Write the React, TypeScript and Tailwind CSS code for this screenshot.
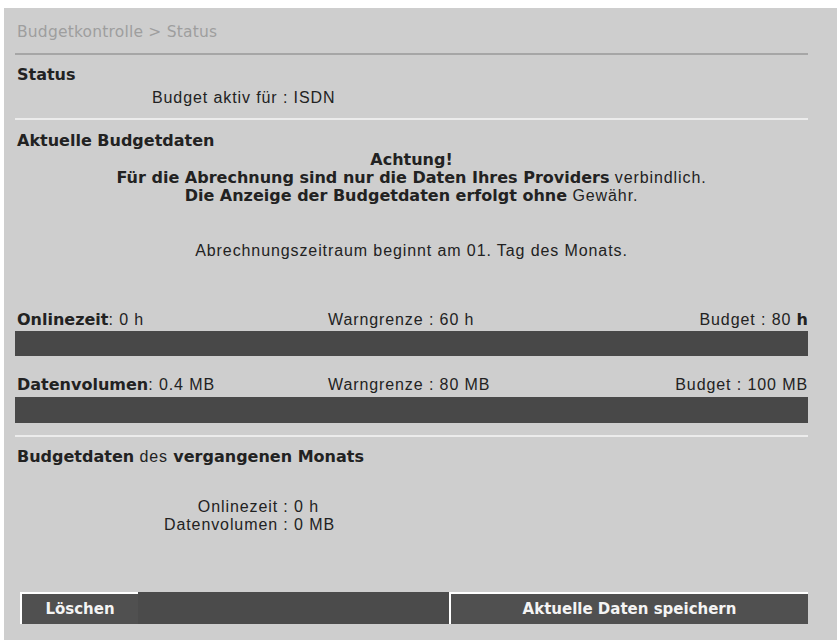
import React from 'react';

const sans = "font-['Liberation_Sans',Arial,sans-serif]";
const heavy = "font-['DejaVu_Sans',Verdana,sans-serif] font-bold tracking-normal";

function B({ children }: { children: React.ReactNode }) {
  return <span className={heavy}>{children}</span>;
}

function UsageRow({ label, value, warn, budget }: { label: string; value: string; warn: string; budget: React.ReactNode }) {
  return (
    <div className="grid grid-cols-[313px_1fr_auto] leading-[18px]">
      <div className="pl-[2px]">
        <B>{label}</B>: {value}
      </div>
      <div>Warngrenze : {warn}</div>
      <div>Budget : {budget}</div>
    </div>
  );
}

export default function App() {
  return (
    <div className="min-h-[640px] bg-white pt-2 pl-1">
      <div className={`${sans} min-h-[632px] bg-[#cecece] pl-[11px] pr-[29px] pt-[15px] text-[16px] tracking-[0.9px] text-[#222]`}>
        <div className="pl-[2px] font-['DejaVu_Sans',Verdana,sans-serif] text-[15.5px] leading-[18px] tracking-[0.2px] text-[#9e9e9e]">
          Budgetkontrolle &gt; Status
        </div>
        <div className="mt-[12px] h-[2px] bg-[#a6a6a6]" />

        <div className="mt-[11px] pl-[2px] leading-[18px]">
          <B>Status</B>
        </div>
        <div className="mt-[5px] pl-[137px] leading-[18px]">Budget aktiv für : ISDN</div>
        <div className="mt-[11px] h-[2px] bg-[#ececec]" />

        <div className="mt-[12px] pl-[2px] leading-[18px]">
          <B>Aktuelle Budgetdaten</B>
        </div>
        <div className="mt-[1px] text-center leading-[18px]">
          <div><B>Achtung!</B></div>
          <div>
            <B>Für die Abrechnung sind nur die Daten Ihres Providers</B> verbindlich.
          </div>
          <div>
            <B>Die Anzeige der Budgetdaten erfolgt ohne</B> Gewähr.
          </div>
        </div>
        <div className="mt-[37px] text-center leading-[18px]">Abrechnungszeitraum beginnt am 01. Tag des Monats.</div>

        <div className="mt-[51px]">
          <UsageRow label="Onlinezeit" value="0 h" warn="60 h" budget={<>80 <B>h</B></>} />
        </div>
        <div className="mt-[2px] h-[25px] bg-[#484848]" />

        <div className="mt-[20px]">
          <UsageRow label="Datenvolumen" value="0.4 MB" warn="80 MB" budget="100 MB" />
        </div>
        <div className="mt-[3px] h-[26px] bg-[#484848]" />
        <div className="mt-[12px] h-[2px] bg-[#ececec]" />

        <div className="mt-[11px] pl-[2px] leading-[18px]">
          <B>Budgetdaten</B> des <B>vergangenen Monats</B>
        </div>
        <div className="mt-[32px] grid grid-cols-[263px_auto] leading-[18px]">
          <div className="text-right">Onlinezeit</div>
          <div>&nbsp;: 0 h</div>
          <div className="text-right">Datenvolumen</div>
          <div>&nbsp;: 0 MB</div>
        </div>

        <div className="mt-[58px] ml-[5px] flex h-[32px] bg-[#4b4b4b] text-white">
          <button className={`${heavy} w-[118px] border-l-2 border-t-2 border-white bg-[#505050] text-[15px] text-[#f4f4f4]`}>
            Löschen
          </button>
          <div className="flex-1" />
          <button className={`${heavy} w-[359px] border-l-2 border-t-2 border-white bg-[#505050] text-[15px] text-[#f4f4f4]`}>
            Aktuelle Daten speichern
          </button>
        </div>
      </div>
    </div>
  );
}
